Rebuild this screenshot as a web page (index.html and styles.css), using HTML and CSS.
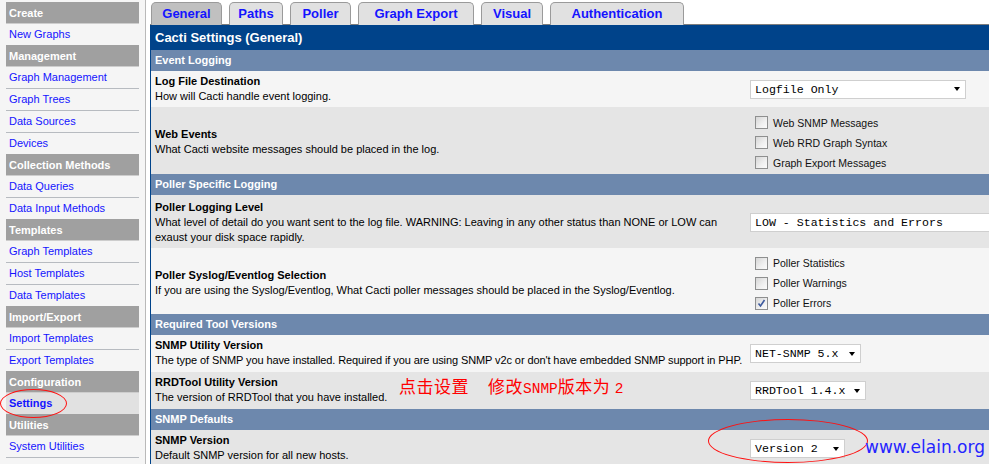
FILE: index.html
```html
<!DOCTYPE html>
<html>
<head>
<meta charset="utf-8">
<title>Cacti Settings</title>
<link rel="stylesheet" href="styles.css">
</head>
<body>
<div class="page">
  <nav class="sidebar">
    <div class="group">
      <div class="menu-head">Create</div>
      <a class="menu-item" href="#">New Graphs</a>
    </div>
    <div class="group">
      <div class="menu-head">Management</div>
      <a class="menu-item" href="#">Graph Management</a>
      <a class="menu-item" href="#">Graph Trees</a>
      <a class="menu-item" href="#">Data Sources</a>
      <a class="menu-item" href="#">Devices</a>
    </div>
    <div class="group">
      <div class="menu-head">Collection Methods</div>
      <a class="menu-item" href="#">Data Queries</a>
      <a class="menu-item" href="#">Data Input Methods</a>
    </div>
    <div class="group">
      <div class="menu-head">Templates</div>
      <a class="menu-item" href="#">Graph Templates</a>
      <a class="menu-item" href="#">Host Templates</a>
      <a class="menu-item" href="#">Data Templates</a>
    </div>
    <div class="group">
      <div class="menu-head">Import/Export</div>
      <a class="menu-item" href="#">Import Templates</a>
      <a class="menu-item" href="#">Export Templates</a>
    </div>
    <div class="group">
      <div class="menu-head">Configuration</div>
      <a class="menu-item active" href="#">Settings</a>
    </div>
    <div class="group">
      <div class="menu-head">Utilities</div>
      <a class="menu-item" href="#">System Utilities</a>
      <a class="menu-item" href="#">User Management</a>
    </div>
  </nav>

  <main class="main">
    <div class="tabs">
      <a class="tab tab-active w-general" href="#">General</a>
      <a class="tab w-paths" href="#">Paths</a>
      <a class="tab w-poller" href="#">Poller</a>
      <a class="tab w-export" href="#">Graph Export</a>
      <a class="tab w-visual" href="#">Visual</a>
      <a class="tab w-auth" href="#">Authentication</a>
    </div>

    <div class="panel">
      <div class="panel-title">Cacti Settings (General)</div>

      <div class="section">Event Logging</div>
      <div class="row row-light h36">
        <div class="cell-label">
          <div class="label">Log File Destination</div>
          <div class="desc">How will Cacti handle event logging.</div>
        </div>
        <div class="cell-field">
          <div class="select w-logfile">Logfile Only<span class="arrow"></span></div>
        </div>
      </div>
      <div class="row row-dark h67 shift">
        <div class="cell-label">
          <div class="label">Web Events</div>
          <div class="desc">What Cacti website messages should be placed in the log.</div>
        </div>
        <div class="cell-field">
          <div class="checks">
            <div class="check"><span class="box"></span><span class="check-text">Web SNMP Messages</span></div>
            <div class="check"><span class="box"></span><span class="check-text">Web RRD Graph Syntax</span></div>
            <div class="check"><span class="box"></span><span class="check-text">Graph Export Messages</span></div>
          </div>
        </div>
      </div>

      <div class="section">Poller Specific Logging</div>
      <div class="row row-dark h53 shift-small">
        <div class="cell-label">
          <div class="label">Poller Logging Level</div>
          <div class="desc">What level of detail do you want sent to the log file. WARNING: Leaving in any other status than NONE or LOW can<br>exaust your disk space rapidly.</div>
        </div>
        <div class="cell-field">
          <div class="select w-low">LOW - Statistics and Errors</div>
        </div>
      </div>
      <div class="row row-light h66 shift">
        <div class="cell-label">
          <div class="label">Poller Syslog/Eventlog Selection</div>
          <div class="desc">If you are using the Syslog/Eventlog, What Cacti poller messages should be placed in the Syslog/Eventlog.</div>
        </div>
        <div class="cell-field">
          <div class="checks">
            <div class="check"><span class="box"></span><span class="check-text">Poller Statistics</span></div>
            <div class="check"><span class="box"></span><span class="check-text">Poller Warnings</span></div>
            <div class="check"><span class="box"><svg width="11" height="11" viewBox="0 0 11 11"><path d="M2.5 5.5 L4.5 8 L8.5 2" fill="none" stroke="#3d5a9e" stroke-width="1.6"/></svg></span><span class="check-text">Poller Errors</span></div>
          </div>
        </div>
      </div>

      <div class="section">Required Tool Versions</div>
      <div class="row row-light h37">
        <div class="cell-label">
          <div class="label">SNMP Utility Version</div>
          <div class="desc desc-tight">The type of SNMP you have installed. Required if you are using SNMP v2c or don't have embedded SNMP support in PHP.</div>
        </div>
        <div class="cell-field">
          <div class="select w-netsnmp">NET-SNMP 5.x<span class="arrow"></span></div>
        </div>
      </div>
      <div class="row row-dark h37">
        <div class="cell-label">
          <div class="label">RRDTool Utility Version</div>
          <div class="desc">The version of RRDTool that you have installed.</div>
        </div>
        <div class="cell-field">
          <div class="select w-rrd">RRDTool 1.4.x<span class="arrow"></span></div>
        </div>
      </div>

      <div class="section">SNMP Defaults</div>
      <div class="row row-dark h37">
        <div class="cell-label">
          <div class="label">SNMP Version</div>
          <div class="desc">Default SNMP version for all new hosts.</div>
        </div>
        <div class="cell-field">
          <div class="select w-version">Version 2<span class="arrow"></span></div>
        </div>
      </div>
    </div>
  </main>

  <div class="mark mark-settings"></div>
  <div class="mark mark-version"></div>
  <div class="note">点击设置<span class="note-gap"></span>修改<span class="note-latin">SNMP</span>版本为 <span class="note-latin">2</span></div>
  <div class="site">www.elain.org</div>
</div>
</body>
</html>
```

FILE: styles.css
```css
html, body {
  margin: 0;
  padding: 0;
  height: 100%;
}

body {
  font-family: "Liberation Sans", Arial, sans-serif;
  font-size: 11px;
  color: #000;
  background: #fff;
  overflow: hidden;
}

.page {
  position: relative;
  display: flex;
  height: 464px;
  overflow: hidden;
}

/* ---------- sidebar ---------- */
.sidebar {
  flex: 0 0 auto;
  width: 133px;
  padding: 2px 6px 0 6px;
  background: #f5f5f5;
  border-right: 1px solid #b9b9b9;
}

.menu-head {
  height: 21px;
  line-height: 22px;
  padding-left: 3px;
  background: #a0a0a0;
  color: #fff;
  font-weight: bold;
  border-bottom: 1px solid #cdcdcd;
}

.menu-item {
  display: block;
  height: 21px;
  line-height: 21px;
  padding-left: 3px;
  color: #1414ff;
  text-decoration: none;
  border-bottom: 1px solid #b7bbc0;
}

.menu-item:last-child {
  border-bottom: none;
}

.menu-item.active {
  background: #e1e1e1;
  font-weight: bold;
}

/* ---------- main ---------- */
.main {
  flex: 1 1 auto;
  padding-left: 4px;
  min-width: 0;
}

.tabs {
  display: flex;
  gap: 7px;
  margin-top: 2px;
  padding-left: 1px;
  height: 22px;
  border-bottom: 1px solid #7d7d7d;
}

.tab {
  box-sizing: border-box;
  height: 23px;
  line-height: 21px;
  text-align: center;
  border: 1px solid #9a9a9a;
  border-bottom: none;
  border-radius: 5px 5px 0 0;
  background: #e1e1e1;
  color: #1414ff;
  font-weight: bold;
  font-size: 13px;
  text-decoration: none;
}

.tab-active {
  background: #c0c0c0;
}

.w-general { width: 71px; }
.w-paths { width: 54px; }
.w-poller { width: 61px; }
.w-export { width: 116px; }
.w-visual { width: 62px; }
.w-auth { width: 134px; }

.panel {
  border-left: 1px solid #00438a;
  overflow: hidden;
}

.panel-title {
  height: 25px;
  line-height: 25px;
  padding-left: 4px;
  background: #00438a;
  color: #fff;
  font-weight: bold;
  font-size: 13px;
}

.section {
  height: 21px;
  line-height: 21px;
  padding-left: 4px;
  background: #6d88ad;
  color: #fff;
  font-weight: bold;
}

.row {
  display: grid;
  grid-template-columns: 595px 1fr;
  align-items: center;
}

.row-light { background: #f5f5f5; }
.row-dark { background: #e5e5e5; }

.h36 { height: 36px; }
.h37 { height: 37px; }
.h53 { height: 53px; }
.h66 { height: 62px; }
.h67 { height: 63px; }

.shift { padding-top: 4px; }
.shift-small { height: 51px; padding-top: 2px; }

.cell-label {
  padding-left: 4px;
  white-space: nowrap;
}

.label {
  font-weight: bold;
  line-height: 15px;
}

.desc {
  line-height: 15.5px;
}

.desc-tight {
  letter-spacing: -0.1px;
}

.cell-field {
  padding-left: 4px;
  min-width: 0;
}

.select {
  display: flex;
  align-items: center;
  box-sizing: border-box;
  height: 19px;
  padding-left: 4px;
  border: 1px solid #cfcfcf;
  background: #fff;
  font-family: "Liberation Mono", "Courier New", monospace;
  font-size: 11.6px;
  white-space: nowrap;
}

.arrow {
  margin-left: auto;
  margin-right: 5px;
  width: 0;
  height: 0;
  border-left: 3.5px solid transparent;
  border-right: 3.5px solid transparent;
  border-top: 4px solid #000;
}

.w-logfile { width: 216px; }
.w-low { width: 300px; }
.w-netsnmp { width: 111px; }
.w-rrd { width: 116px; }
.w-version { width: 95px; }

.checks {
  display: flex;
  flex-direction: column;
}

.check {
  display: flex;
  align-items: center;
  gap: 5px;
  height: 20px;
  padding-left: 5px;
}

.box {
  display: flex;
  align-items: center;
  justify-content: center;
  box-sizing: border-box;
  width: 13px;
  height: 13px;
  border: 1px solid #8e8f8f;
  background: linear-gradient(135deg, #d6d6d6 0%, #f0f0f0 60%, #fbfbfb 100%);
}

.check-text {
  font-size: 10.5px;
  color: #111;
}

/* ---------- annotations over the screenshot ---------- */
.mark {
  position: absolute;
  border: 1px solid #ff1010;
  border-radius: 50%;
  pointer-events: none;
}

.mark-settings {
  left: 0;
  top: 389px;
  width: 65px;
  height: 27px;
}

.mark-version {
  left: 708px;
  top: 419px;
  width: 158px;
  height: 42px;
}

.note {
  position: absolute;
  left: 399px;
  top: 376px;
  color: #ff0000;
  font-family: "Noto Sans CJK SC", sans-serif;
  font-size: 17px;
  line-height: 20px;
  letter-spacing: 0.5px;
  white-space: pre;
}

.note-gap {
  display: inline-block;
  width: 19px;
}

.note-latin {
  font-family: "Liberation Mono", monospace;
  font-size: 14.5px;
  letter-spacing: 0;
}

.site {
  position: absolute;
  left: 865px;
  top: 436px;
  color: #2424ff;
  font-family: "DejaVu Sans", sans-serif;
  font-size: 17px;
  line-height: 22px;
}
```
